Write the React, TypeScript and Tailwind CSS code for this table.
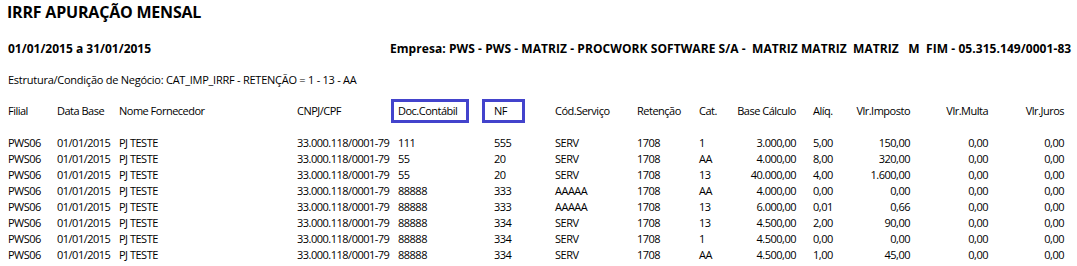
const COLUMNS = [
  { key: "filial", label: "Filial", width: "w-[49px]", align: "left" },
  { key: "data", label: "Data Base", width: "w-[62px]", align: "left" },
  { key: "nome", label: "Nome Fornecedor", width: "w-[178px]", align: "left" },
  { key: "cnpj", label: "CNPJ/CPF", width: "w-[101px]", align: "left" },
  { key: "doc", label: "Doc.Contábil", width: "w-[96px]", align: "left" },
  { key: "nf", label: "NF", width: "w-[61px]", align: "left" },
  { key: "cod", label: "Cód.Serviço", width: "w-[82px]", align: "left" },
  { key: "ret", label: "Retenção", width: "w-[62px]", align: "left" },
  { key: "cat", label: "Cat.", width: "w-[37px]", align: "left" },
  { key: "base", label: "Base Cálculo", width: "w-[60px]", align: "right" },
  { key: "aliq", label: "Alíq.", width: "w-[57px] pl-[17px]", align: "left" },
  { key: "imposto", label: "Vlr.Imposto", width: "w-[57px]", align: "right" },
  { key: "multa", label: "Vlr.Multa", width: "w-[78px]", align: "right" },
  { key: "juros", label: "Vlr.Juros", width: "w-[76px]", align: "right" },
] as const;

type Row = Record<(typeof COLUMNS)[number]["key"], string>;

const base = { filial: "PWS06", data: "01/01/2015", nome: "PJ TESTE", cnpj: "33.000.118/0001-79", ret: "1708", multa: "0,00", juros: "0,00" };

const ROWS: Row[] = [
  { ...base, doc: "111", nf: "555", cod: "SERV", cat: "1", base: "3.000,00", aliq: "5,00", imposto: "150,00" },
  { ...base, doc: "55", nf: "20", cod: "SERV", cat: "AA", base: "4.000,00", aliq: "8,00", imposto: "320,00" },
  { ...base, doc: "55", nf: "20", cod: "SERV", cat: "13", base: "40.000,00", aliq: "4,00", imposto: "1.600,00" },
  { ...base, doc: "88888", nf: "333", cod: "AAAAA", cat: "AA", base: "4.000,00", aliq: "0,00", imposto: "0,00" },
  { ...base, doc: "88888", nf: "333", cod: "AAAAA", cat: "13", base: "6.000,00", aliq: "0,01", imposto: "0,66" },
  { ...base, doc: "88888", nf: "334", cod: "SERV", cat: "13", base: "4.500,00", aliq: "2,00", imposto: "90,00" },
  { ...base, doc: "88888", nf: "334", cod: "SERV", cat: "1", base: "4.500,00", aliq: "0,00", imposto: "0,00" },
  { ...base, doc: "88888", nf: "334", cod: "SERV", cat: "AA", base: "4.500,00", aliq: "1,00", imposto: "45,00" },
];

function HeaderCell({ col }: { col: (typeof COLUMNS)[number] }) {
  if (col.key === "doc") {
    return (
      <div className={`${col.width} shrink-0`}>
        <div className="-ml-[7px] flex h-[24px] w-[78px] items-center border-[3px] border-[#4343cc] pl-[4px]">{col.label}</div>
      </div>
    );
  }
  if (col.key === "nf") {
    return (
      <div className={`${col.width} shrink-0`}>
        <div className="-ml-[12px] flex h-[24px] w-[43px] items-center border-[3px] border-[#4343cc] pl-[9px]">{col.label}</div>
      </div>
    );
  }
  return (
    <div className={`${col.width} shrink-0 whitespace-nowrap ${col.align === "right" ? "text-right" : ""}`}>{col.label}</div>
  );
}

export default function App() {
  return (
    <div className="h-[266px] w-[1077px] overflow-hidden bg-white pl-[8px] pt-[2px] text-black [font-family:'Open_Sans',sans-serif]">
      <div className="-ml-[1px] h-[20px] text-[16px] leading-[20px] font-bold tracking-[-0.2px]">IRRF APURAÇÃO MENSAL</div>

      <div className="mt-[19px] flex h-[16px] text-[12px] leading-[16px] font-bold">
        <div className="w-[382px] shrink-0">01/01/2015 a 31/01/2015</div>
        <div className="whitespace-pre tracking-[0.06px]">
          Empresa: PWS - PWS - MATRIZ - PROCWORK SOFTWARE S/A -  MATRIZ MATRIZ  MATRIZ   M  FIM - 05.315.149/0001-83
        </div>
      </div>

      <div className="mt-[15px] h-[16px] text-[11px] leading-[16px] tracking-[-0.25px]">
        Estrutura/Condição de Negócio: CAT_IMP_IRRF - RETENÇÃO = 1 - 13 - AA
      </div>

      <div className="text-[11px] leading-[16px] tracking-[-0.5px]">
        <div className="mt-[11px] flex h-[24px] items-center">
          {COLUMNS.map((col) => (
            <HeaderCell key={col.key} col={col} />
          ))}
        </div>

        <div className="mt-[12px]">
          {ROWS.map((row, i) => (
            <div key={i} className="flex h-[16px]">
              {COLUMNS.map((col) => (
                <div
                  key={col.key}
                  className={`${col.width} shrink-0 whitespace-nowrap ${col.align === "right" ? "text-right" : ""}`}
                >
                  {row[col.key]}
                </div>
              ))}
            </div>
          ))}
        </div>
      </div>
    </div>
  );
}
